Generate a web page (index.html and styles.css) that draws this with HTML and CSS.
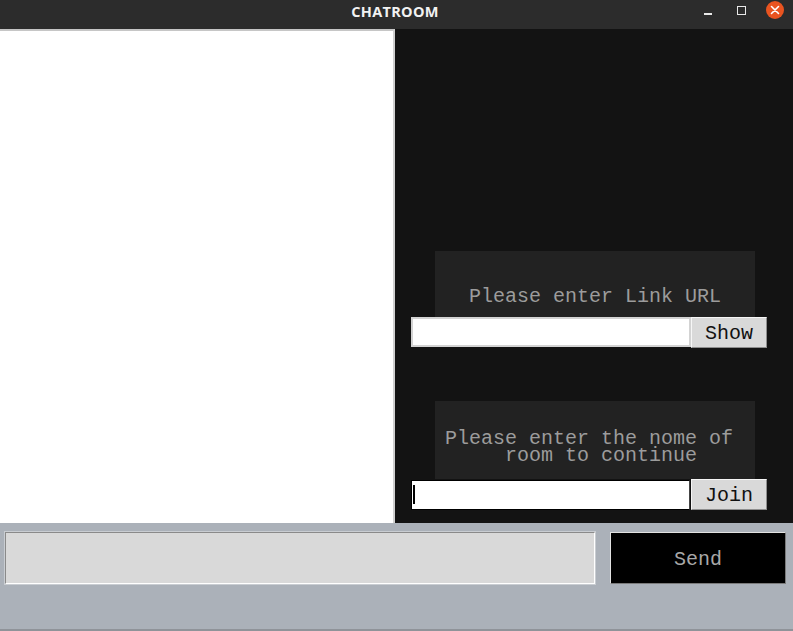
FILE: index.html
```html
<!DOCTYPE html>
<html>
<head>
<meta charset="utf-8">
<title>CHATROOM</title>
<link rel="stylesheet" href="styles.css">
</head>
<body>
<div class="window">
  <div class="titlebar">
    <span class="title">CHATROOM</span>
    <div class="controls">
      <span class="ctl-min"></span>
      <span class="ctl-max"></span>
      <span class="ctl-close">
        <svg width="18" height="18" viewBox="0 0 18 18"><path d="M5.5 5.5 L12.5 12.5 M12.5 5.5 L5.5 12.5" stroke="#fff" stroke-width="1.6" stroke-linecap="round"/></svg>
      </span>
    </div>
  </div>
  <div class="main">
    <div class="chatlog"></div>
    <div class="side">
      <div class="label label-url">Please enter Link URL</div>
      <div class="row">
        <div class="entry"></div>
        <div class="btn">Show</div>
      </div>
      <div class="label label-room">Please enter the nome of 
 room to continue</div>
      <div class="row row-room">
        <div class="entry entry-focus"><span class="caret"></span></div>
        <div class="btn">Join</div>
      </div>
    </div>
  </div>
  <div class="bottom">
    <div class="msg"></div>
    <div class="send">Send</div>
  </div>
</div>
</body>
</html>
```

FILE: styles.css
```css
html, body {
  margin: 0;
  padding: 0;
  background: #2b2b2b;
}
.window {
  width: 793px;
  height: 631px;
  display: flex;
  flex-direction: column;
  overflow: hidden;
}
.titlebar {
  height: 29px;
  flex: none;
  background: #2c2c2c;
  position: relative;
  display: flex;
  align-items: center;
  justify-content: center;
}
.title {
  color: #f2f2f2;
  font-family: "Open Sans", "DejaVu Sans", sans-serif;
  font-weight: 700;
  font-size: 14.5px;
  letter-spacing: 0.3px;
  margin-left: -3px;
  margin-top: -7px;
}
.controls {
  position: absolute;
  right: 9px;
  top: 1px;
  display: flex;
  align-items: center;
  height: 18px;
}
.ctl-min {
  width: 8px;
  height: 1.5px;
  background: #e8e8e8;
  margin-top: 8px;
  margin-right: 25px;
}
.ctl-max {
  width: 7px;
  height: 7px;
  border: 1.5px solid #e8e8e8;
  margin-right: 20px;
}
.ctl-close {
  width: 18px;
  height: 18px;
  border-radius: 50%;
  background: #e95420;
  display: flex;
}
.main {
  height: 494px;
  flex: none;
  display: flex;
}
.chatlog {
  width: 395px;
  box-sizing: border-box;
  background: #ffffff;
  border-top: 2px solid #c6c6c6;
  border-right: 2px solid #cfcfcf;
}
.side {
  flex: 1;
  background: #131313;
  display: flex;
  flex-direction: column;
  padding-top: 222px;
  font-family: "Liberation Mono", "DejaVu Sans Mono", monospace;
  font-size: 20px;
}
.label {
  width: 320px;
  margin-left: 40px;
  box-sizing: border-box;
  background: #222222;
  color: #9c9c9c;
  text-align: center;
  white-space: pre;
}
.label-url {
  height: 66px;
  padding-top: 36px;
  line-height: 20px;
}
.label-room {
  height: 78px;
  padding-top: 29px;
  line-height: 17px;
  margin-top: 53px;
}
.row {
  display: flex;
  margin-left: 16px;
  height: 31px;
}
.entry {
  width: 280px;
  height: 30px;
  box-sizing: border-box;
  background: #ffffff;
  border: 2px solid #d3d3d3;
  position: relative;
}
.entry-focus {
  border: 1px solid #000000;
  border-right-color: #444;
  height: 30px;
  margin-top: 1px;
  width: 279px;
}
.caret {
  position: absolute;
  left: 1px;
  top: 4px;
  width: 2px;
  height: 19px;
  background: #000000;
}
.btn {
  width: 76px;
  height: 31px;
  box-sizing: border-box;
  background: #d9d9d9;
  border: 1px solid;
  border-color: #f6f6f6 #8e8e8e #8e8e8e #f6f6f6;
  color: #111111;
  display: flex;
  align-items: center;
  justify-content: center;
  line-height: 1;
  padding-top: 3px;
}
.row-room .btn {
  margin-left: 1px;
}
.bottom {
  flex: 1;
  background: #abb1b9;
  border-bottom: 2px solid #8f9399;
  display: flex;
  padding: 9px 0 0 5px;
  gap: 15px;
  align-items: flex-start;
}
.msg {
  width: 590px;
  height: 52px;
  box-sizing: border-box;
  background: #d9d9d9;
  border: 1px solid;
  border-color: #8a8a8a #ffffff #ffffff #8a8a8a;
  box-shadow: 0 0 0 1px #c9cdd2;
}
.send {
  width: 176px;
  height: 52px;
  box-sizing: border-box;
  background: #000000;
  border: 1px solid;
  border-color: #e2e2e2 #7a7a7a #7a7a7a #e2e2e2;
  color: #a8a8a8;
  font-family: "Liberation Mono", "DejaVu Sans Mono", monospace;
  font-size: 20px;
  display: flex;
  align-items: center;
  justify-content: center;
  padding-top: 2px;
}
```
